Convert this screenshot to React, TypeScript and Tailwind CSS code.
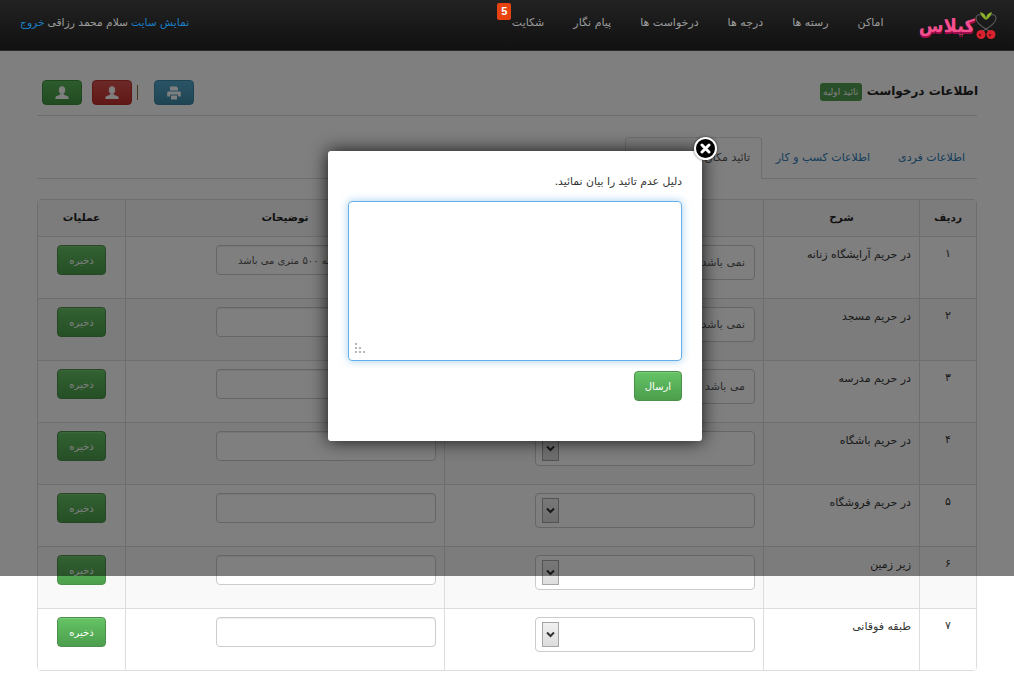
import React from "react";

const UserIcon = () => (
  <svg width="14" height="14" viewBox="0 0 14 14" fill="currentColor">
    <ellipse cx="7" cy="4" rx="3.2" ry="3.8" />
    <path d="M5 7.5 L5.4 8.6 L0.8 10.6 Q0.4 11 0.4 13 L13.6 13 Q13.6 11 13.2 10.6 L8.6 8.6 L9 7.5 Z" />
  </svg>
);

const PrintIcon = () => (
  <svg width="14" height="14" viewBox="0 0 14 14" fill="currentColor">
    <path d="M3 0.5 H9.5 L11 2 V4.5 H3 Z" />
    <path d="M1 5.5 H13 Q13.8 5.5 13.8 6.5 V10.5 H11 V8.5 H3 V10.5 H0.2 V6.5 Q0.2 5.5 1 5.5 Z" />
    <path d="M4 9.5 H10 V13.5 H4 Z" />
  </svg>
);

const Chevron = () => (
  <svg width="9" height="7" viewBox="0 0 9 7" fill="none" stroke="#333" strokeWidth="2">
    <path d="M1 1.5 L4.5 5 L8 1.5" />
  </svg>
);

const rows = [
  { n: "۱", title: "در حریم آرایشگاه زنانه", sel: "نمی باشد", note: "این مکان در فاصله ۵۰۰ متری می باشد" },
  { n: "۲", title: "در حریم مسجد", sel: "نمی باشد", note: "" },
  { n: "۳", title: "در حریم مدرسه", sel: "می باشد", note: "" },
  { n: "۴", title: "در حریم باشگاه", sel: "", note: "" },
  { n: "۵", title: "در حریم فروشگاه", sel: "", note: "" },
  { n: "۶", title: "زیر زمین", sel: "", note: "" },
  { n: "۷", title: "طبقه فوقانی", sel: "", note: "" },
];

const navItems = ["اماکن", "رسته ها", "درجه ها", "درخواست ها", "پیام نگار"];

function Logo() {
  return (
    <div className="flex items-end h-[28px] w-[76px] ml-[23px]">
      <svg width="22" height="28" viewBox="0 0 22 28" className="shrink-0">
        <path d="M11 18 C4 14 1 11 1 7 C1 4 4 3 7 4 M11 18 C18 14 21 11 21 7 C21 4 18 3 15 4" fill="none" stroke="#555" strokeWidth="1.2" />
        <path d="M11 9 C8 7 6 5 5 1 C9 2 11 4 11 9 Z" fill="#8db32a" />
        <path d="M11 9 C14 7 16 5 17 1 C13 2 11 4 11 9 Z" fill="#8db32a" />
        <path d="M11 18 L6 21 M11 18 L16 21" stroke="#666" strokeWidth="1" />
        <circle cx="6" cy="23.5" r="4.5" fill="#d8232f" />
        <circle cx="16" cy="23.5" r="4.5" fill="#d8232f" />
        <circle cx="5" cy="24" r="1.2" fill="#7a0d15" />
        <circle cx="15" cy="24" r="1.2" fill="#7a0d15" />
      </svg>
      <span className="text-[18px] leading-[24px] font-bold text-[#f5508f] [text-shadow:0_2px_0_#a00c4c] mb-[1px]">کیلاس</span>
    </div>
  );
}

function ActionButton({ color, children }: { color: string; children: React.ReactNode }) {
  return (
    <button className={`w-[40px] h-[25px] rounded-[4px] border flex items-center justify-center text-white ${color}`}>
      {children}
    </button>
  );
}

function SaveButton({ label }: { label: string }) {
  return (
    <button className="h-[30px] rounded-[4px] border border-[#4a8f4a] bg-gradient-to-b from-[#65c465] to-[#4c9e4c] text-white text-[10px] font-normal w-[49px] shadow-[inset_0_1px_0_rgba(255,255,255,0.15)]">
      {label}
    </button>
  );
}

export default function App() {
  return (
    <div dir="rtl" className="relative h-[691px] w-[1014px] overflow-hidden bg-white text-[#333] text-[11px] font-['DejaVu_Sans',sans-serif]">
      {/* navbar */}
      <nav className="relative z-20 h-[51px] flex items-center justify-between pr-[17px] pl-[20px] bg-gradient-to-b from-[#222222] to-[#111111] border-b border-[#2a2a2a]">
        <div className="flex items-center">
          <Logo />
          <ul className="flex items-center text-[#9d9d9d] text-[11px]">
            {navItems.map((t) => (
              <li key={t} className="px-[14.5px] pb-[3px]">{t}</li>
            ))}
            <li className="relative px-[14.5px] pb-[3px]">
              شکایت
              <span className="absolute top-[-12px] left-[0px] w-[14px] h-[17px] rounded-[2px] bg-[#e8430e] text-white text-[11px] font-bold leading-[17px] text-center font-['Liberation_Sans']">5</span>
            </li>
          </ul>
        </div>
        <div className="text-[10.7px] text-[#9d9d9d] pb-[3px] flex gap-[3px]">
          <a className="text-[#1a80c8]">نمایش سایت</a>
          <span>سلام محمد رزاقی</span>
          <a className="text-[#1a80c8]">خروج</a>
        </div>
      </nav>

      {/* page content */}
      <main className="px-[37px]">
        <div className="h-[65px] pt-[29px] flex items-start justify-between border-b border-[#dddddd]">
          <div className="flex items-center gap-[5px] h-[25px] mr-[-1px] mt-[-1px]">
            <h1 className="text-[12px] font-bold text-[#222] mb-[2px]">اطلاعات درخواست</h1>
            <span className="h-[18px] w-[42px] rounded-[3px] bg-[#529f52] text-white text-[9px] leading-[18px] text-center">تائید اولیه</span>
          </div>
          <div className="flex items-center ml-[5px]">
            <ActionButton color="border-[#3d86a4] bg-gradient-to-b from-[#54a8cc] to-[#3d8aa8]"><PrintIcon /></ActionButton>
            <span className="w-[1px] h-[15px] bg-[#8a6d3b] mr-[16px] ml-[5px]" />
            <ActionButton color="border-[#b92c28] bg-gradient-to-b from-[#d9534f] to-[#c12e2a]"><UserIcon /></ActionButton>
            <span className="w-[10px]" />
            <ActionButton color="border-[#3e8f3e] bg-gradient-to-b from-[#5cb85c] to-[#419641]"><UserIcon /></ActionButton>
          </div>
        </div>

        {/* tabs */}
        <div className="mt-[21px] h-[42px] flex items-start border-b border-[#dddddd] text-[#2a7ab8] text-[11px]">
          <div className="h-[42px] w-[92px] pr-[12px] leading-[42px]">اطلاعات فردی</div>
          <div className="h-[42px] w-[123px] pr-[15px] leading-[42px]">اطلاعات کسب و کار</div>
          <div className="h-[42px] w-[137px] pr-[11px] leading-[40px] whitespace-nowrap overflow-hidden text-[#555] bg-white border border-b-white border-[#dddddd] rounded-t-[4px]">تائید مکان کسب و کار</div>
        </div>

        {/* table */}
        <table className="mt-[20px] w-[940px] table-fixed border-separate border-spacing-0 border border-[#dddddd] rounded-[4px] text-[11px] text-[#333]">
          <colgroup>
            <col className="w-[57px]" />
            <col className="w-[156px]" />
            <col className="w-[319px]" />
            <col className="w-[319px]" />
            <col className="w-[87px]" />
          </colgroup>
          <thead>
            <tr className="h-[36px] bg-[#f9f9f9] font-bold text-[#222] text-[10.5px]">
              <th className="border-l border-[#dddddd] font-bold">ردیف</th>
              <th className="border-l border-[#dddddd] font-bold">شرح</th>
              <th className="border-l border-[#dddddd] font-bold">وضعیت</th>
              <th className="border-l border-[#dddddd] font-bold">توضیحات</th>
              <th className="font-bold">عملیات</th>
            </tr>
          </thead>
          <tbody>
            {rows.map((r, i) => (
              <tr key={r.n} className={`h-[62px] ${i % 2 === 1 ? "bg-[#f9f9f9]" : "bg-white"}`}>
                <td className="align-top border-t border-l border-[#dddddd] pt-[9px] text-center text-[11px]">{r.n}</td>
                <td className="align-top border-t border-l border-[#dddddd] pt-[10px] pr-[8px]">{r.title}</td>
                <td className="align-top border-t border-l border-[#dddddd] pt-[8px]">
                  <div className="mr-[8px] w-[220px] h-[35px] rounded-[4px] border border-[#cccccc] bg-white flex items-center justify-between pr-[9px] pl-[6px] text-[11px] text-[#555]">
                    <span className="pt-[2px]">{r.sel}</span>
                    <span className="w-[17px] h-[25px] border border-[#a6a6a6] bg-gradient-to-b from-[#f0f0f0] to-[#dddddd] flex items-center justify-center"><Chevron /></span>
                  </div>
                </td>
                <td className="align-top border-t border-l border-[#dddddd] pt-[8px]">
                  <div className="mr-[8px] w-[220px] h-[30px] rounded-[4px] border border-[#cccccc] bg-white shadow-[inset_0_1px_1px_rgba(0,0,0,0.075)] flex items-center justify-end pl-[21px] text-[10px] text-[#555] whitespace-nowrap overflow-hidden">
                    {r.note}
                  </div>
                </td>
                <td className="align-top border-t border-[#dddddd] pt-[8px] pr-[19px]">
                  <SaveButton label="ذخیره" />
                </td>
              </tr>
            ))}
          </tbody>
        </table>
      </main>

      {/* overlay */}
      <div className="absolute top-0 inset-x-0 h-[576px] bg-black/50 z-10" />

      {/* modal */}
      <div className="absolute z-30 left-[328px] top-[151px] w-[374px] h-[290px] bg-white rounded-[3px] shadow-[0_0_18px_rgba(0,0,0,0.85)] px-[20px] pt-[23px]">
        <p className="text-[10.8px] leading-[16px] text-[#333] h-[27px]">دلیل عدم تائید را بیان نمائید.</p>
        <div className="relative w-[334px] h-[160px] rounded-[4px] border border-[#66afe9] shadow-[0_0_8px_rgba(102,175,233,0.6)]">
          <svg className="absolute left-[6px] bottom-[6px]" width="12" height="11" viewBox="0 0 12 11" fill="#b5b5b5">
            <rect x="0" y="0" width="2" height="2" />
            <rect x="0" y="4" width="2" height="2" />
            <rect x="4" y="4" width="2" height="2" />
            <rect x="0" y="8" width="2" height="2" />
            <rect x="4" y="8" width="2" height="2" />
            <rect x="8" y="8" width="2" height="2" />
          </svg>
        </div>
        <button className="mt-[10px] block h-[30px] w-[48px] rounded-[4px] border border-[#4a8f4a] bg-gradient-to-b from-[#65c465] to-[#4c9e4c] text-white text-[10px] font-normal shadow-[inset_0_1px_0_rgba(255,255,255,0.15)]">ارسال</button>
        <span className="absolute top-[-14px] right-[-15px] w-[23px] h-[23px] rounded-full bg-black border-2 border-white shadow-[0_0_3px_rgba(0,0,0,0.6)] flex items-center justify-center">
          <svg width="11" height="11" viewBox="0 0 11 11" stroke="white" strokeWidth="3" strokeLinecap="round">
            <path d="M2 2 L9 9 M9 2 L2 9" />
          </svg>
        </span>
      </div>
    </div>
  );
}
